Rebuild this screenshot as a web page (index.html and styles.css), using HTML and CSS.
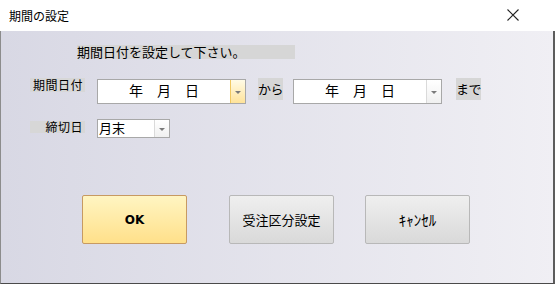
FILE: index.html
```html
<!DOCTYPE html>
<html>

<head>
  <title>期間の設定</title>
  <link rel="stylesheet" href="styles.css">
</head>

<body>
  <div class="window">

    <div class="titlebar">
      <span class="title">期間の設定</span>
      <span class="close">
        <svg width="12" height="12" viewBox="0 0 12 12">
          <path d="M0.5 0.5 L11.5 11.5 M11.5 0.5 L0.5 11.5" stroke="#222" stroke-width="1.1" fill="none"/>
        </svg>
      </span>
    </div>

    <div class="dialog-body">

      <div class="message">期間日付を設定して下さい。</div>

      <div class="row row-period">
        <div class="label label-period">期間日付</div>
        <div class="combo combo-date combo-from">
          <div class="combo-text">年　月　日</div>
          <div class="combo-btn combo-btn-hot"><span class="arrow"></span></div>
        </div>
        <div class="word word-from">から</div>
        <div class="combo combo-date combo-to">
          <div class="combo-text">年　月　日</div>
          <div class="combo-btn"><span class="arrow"></span></div>
        </div>
        <div class="word word-to">まで</div>
      </div>

      <div class="row row-close">
        <div class="label label-close">締切日</div>
        <div class="combo combo-small">
          <div class="combo-text combo-text-left">月末</div>
          <div class="combo-btn"><span class="arrow"></span></div>
        </div>
      </div>

      <div class="buttons">
        <button class="btn btn-ok">OK</button>
        <button class="btn btn-gray btn-setting">受注区分設定</button>
        <button class="btn btn-gray btn-cancel">ｷｬﾝｾﾙ</button>
      </div>

    </div>
  </div>
</body>

</html>
```

FILE: styles.css
```css
body{
  margin: 0;
  font-family: "Noto Sans CJK JP", sans-serif;
  color: #000;
}

.window{
  width: 555px;
  height: 284px;
  display: flex;
  flex-direction: column;
}

.titlebar{
  height: 31px;
  background-color: #fff;
  display: flex;
  align-items: center;
  justify-content: space-between;
}
.title{
  font-size: 12px;
  margin-left: 9px;
  margin-top: -1px;
}
.close{
  display: flex;
  margin-right: 36px;
  margin-top: -1px;
}

.dialog-body{
  flex: 1;
  background: linear-gradient(to right, #d8d8e4, #f0eff4);
  border-left: 1px solid #8c8c8c;
  border-right: 2px solid #5c5c5c;
  border-bottom: 1px solid #4a4a4a;
  display: flex;
  flex-direction: column;
}

.message{
  margin-top: 14px;
  margin-left: 76px;
  width: 218px;
  height: 14px;
  line-height: 14px;
  font-size: 13px;
  background-color: #d6d6d6;
  white-space: nowrap;
}

.row{
  display: flex;
  align-items: flex-start;
}
.row-period{
  margin-top: 19px;
  margin-left: 29px;
}
.row-close{
  margin-top: 15px;
  margin-left: 29px;
}

.label{
  width: 55px;
  background-color: #d7d7d7;
  font-size: 12px;
  text-align: right;
  padding-right: 2px;
  box-sizing: border-box;
  white-space: nowrap;
}
.label-period{
  height: 14px;
  line-height: 13px;
  letter-spacing: 0.5px;
}
.label-close{
  height: 12px;
  line-height: 12px;
  margin-top: 2px;
  letter-spacing: 0.5px;
}

.word{
  background-color: #d6d6d6;
  font-size: 13px;
  height: 22px;
  line-height: 22px;
  width: 25px;
  text-align: center;
  white-space: nowrap;
  letter-spacing: -0.5px;
}
.word-from{
  margin-left: 12px;
}
.word-to{
  margin-left: 14px;
}

.combo{
  display: flex;
  background-color: #fff;
  border: 1px solid #a8a8a8;
  box-sizing: border-box;
}
.combo-date{
  width: 149px;
  height: 25px;
  margin-top: 1px;
}
.combo-from{
  margin-left: 12px;
}
.combo-to{
  margin-left: 10px;
}
.combo-small{
  width: 73px;
  height: 19px;
  margin-left: 12px;
}

.combo-text{
  flex: 1;
  text-align: center;
  font-size: 14px;
  line-height: 21px;
  white-space: nowrap;
}
.combo-text-left{
  text-align: left;
  padding-left: 1px;
  line-height: 16px;
  font-size: 13px;
}

.combo-btn{
  width: 14px;
  border-left: 1px solid #dadada;
  background: linear-gradient(#ffffff, #f0f0f0);
  display: flex;
  align-items: center;
  justify-content: center;
}
.combo-btn-hot{
  border-left: 1px solid #f0c860;
  background: linear-gradient(#fffbe6, #ffe39a);
}
.arrow{
  width: 0;
  height: 0;
  border-left: 3px solid transparent;
  border-right: 3px solid transparent;
  border-top: 3px solid #7a7a7a;
  margin-top: 2px;
}

.buttons{
  display: flex;
  margin-top: 57px;
  margin-left: 81px;
}
.btn{
  width: 105px;
  height: 49px;
  border-radius: 2px;
  font-family: "Noto Sans CJK JP", sans-serif;
  font-size: 13px;
  padding: 0;
  color: #000;
}
.btn-ok{
  border: 1px solid #c79a62;
  background: linear-gradient(#fff5c2, #ffe08a);
  font-family: "DejaVu Sans", sans-serif;
  font-weight: bold;
  font-size: 12px;
}
.btn-gray{
  border: 1px solid #b8b8b8;
  background: linear-gradient(#efefef, #d9d9d9);
}
.btn-setting{
  margin-left: 42px;
}
.btn-cancel{
  margin-left: 31px;
  font-size: 15px;
}
```
